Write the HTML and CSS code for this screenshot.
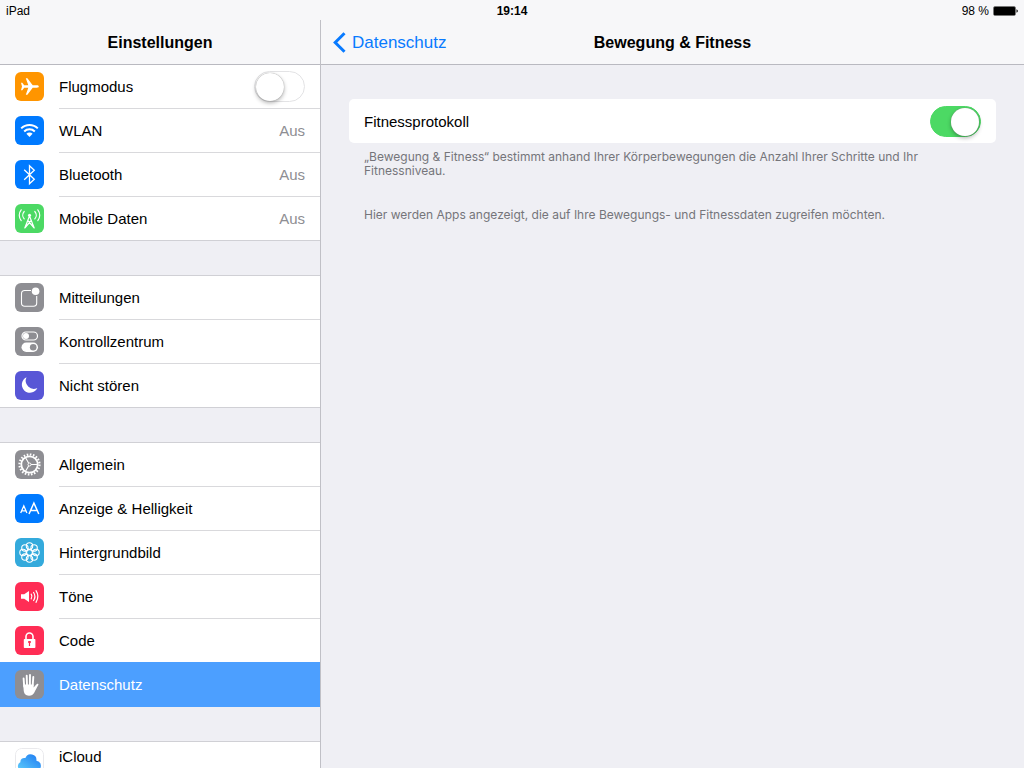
FILE: index.html
```html
<!DOCTYPE html>
<html lang="de">
<head>
<meta charset="utf-8">
<meta name="viewport" content="width=device-width, initial-scale=1">
<title>Einstellungen</title>
<link rel="stylesheet" href="styles.css">
</head>
<body>
<div class="screen">
  <div class="statusbar">
    <span class="device">iPad</span>
    <time class="clock">19:14</time>
    <span class="power">98 %
      <svg class="battery" viewBox="0 0 25 10" aria-hidden="true"><rect x=".5" y=".5" width="22" height="9" rx="1.5" fill="none" stroke="#777"/><rect x="1" y="1" width="21" height="8" rx=".5"/><path d="M23.5 3.2q1.3.5 1.3 1.8t-1.3 1.8z"/></svg>
    </span>
  </div>

  <aside class="sidebar">
    <header class="navbar"><h1 class="title">Einstellungen</h1></header>
    <nav class="menu">
      <ul class="group">
        <li class="row">
          <svg class="icon orange" viewBox="0 0 29 29"><path fill="#fff" d="M23.8 14.5c0-.8-1-1.2-2-1.2h-4.1L12.400 6.300H10.800L13.300 13.300H9.200L7.300 10.800H6L7 14.500L6 18.200H7.300L9.200 15.700H13.300L10.800 22.700H12.400L17.700 15.700H21.800C22.800 15.700 23.800 15.300 23.800 14.500Z"/></svg>
          <label class="line" for="flight"><span>Flugmodus</span><input class="switch" type="checkbox" id="flight"></label>
        </li>
        <li><a class="row" href="#wlan">
          <svg class="icon blue" viewBox="0 0 29 29"><g fill="none" stroke="#fff" stroke-width="2"><path d="M6.200 12.400a11.800 11.800 0 0 1 16.600 0"/><path d="M9.200 15.500a7.500 7.500 0 0 1 10.600 0"/></g><path fill="#fff" d="M11.400 17.700a4.400 4.400 0 0 1 6.200 0L14.500 20.900z"/></svg>
          <span class="line"><span>WLAN</span><span class="value">Aus</span></span></a></li>
        <li><a class="row" href="#bluetooth">
          <svg class="icon blue" viewBox="0 0 29 29"><path fill="none" stroke="#fff" stroke-width="1.300" d="M9.200 9.800L19.300 19.300L14.500 23.800V5.800L19.300 10.300L9.200 19.800"/></svg>
          <span class="line"><span>Bluetooth</span><span class="value">Aus</span></span></a></li>
        <li><a class="row" href="#mobile">
          <svg class="icon green" viewBox="0 0 29 29"><g fill="none" stroke="#fff" stroke-width="1.200" stroke-linecap="round"><path d="M9.200 7.500a5.500 5.500 0 0 0 0 7.400M19.800 7.500a5.500 5.500 0 0 1 0 7.400M6.200 5.800a8.500 8.500 0 0 0 0 10.800M22.800 5.800a8.500 8.500 0 0 1 0 10.800"/><path d="M14.500 12L9.800 24M14.500 12L19.200 24M12.800 16.500L18.800 23.500M16.200 16.500L10.200 23.500M12.500 17.500h4"/></g><circle cx="14.500" cy="11.200" r="1.500" fill="#fff"/></svg>
          <span class="line"><span>Mobile Daten</span><span class="value">Aus</span></span></a></li>
      </ul>

      <ul class="group">
        <li><a class="row" href="#mitteilungen">
          <svg class="icon gray" viewBox="0 0 29 29"><path fill="none" stroke="#fff" stroke-width="1.100" d="M16 7.500H9.700a3.200 3.200 0 0 0-3.200 3.200v9.300a3.200 3.200 0 0 0 3.200 3.200h8.800a3.200 3.200 0 0 0 3.200-3.200V13"/><circle cx="20.600" cy="8.300" r="3.800" fill="#fff"/></svg>
          <span class="line">Mitteilungen</span></a></li>
        <li><a class="row" href="#kontrollzentrum">
          <svg class="icon gray" viewBox="0 0 29 29"><rect x="7" y="5" width="15.500" height="8" rx="4" fill="none" stroke="#fff" stroke-width="1.200"/><circle cx="11" cy="9" r="3" fill="#fff"/><rect x="6.500" y="15.500" width="16.500" height="9.500" rx="4.750" fill="#fff"/><circle cx="18.200" cy="20.250" r="3.300" fill="#8e8e93"/></svg>
          <span class="line">Kontrollzentrum</span></a></li>
        <li><a class="row" href="#ruhe">
          <svg class="icon purple" viewBox="0 0 29 29"><path fill="#fff" d="M11.500 6.300A8.100 8.100 0 1 0 22.300 17A8.100 8.100 0 0 1 11.500 6.300Z"/></svg>
          <span class="line">Nicht stören</span></a></li>
      </ul>

      <ul class="group">
        <li><a class="row" href="#allgemein">
          <svg class="icon gray" viewBox="0 0 29 29"><g fill="none" stroke="#fff"><circle cx="14.500" cy="14.500" r="10" stroke-width="2.200" stroke-dasharray="1.600 1.542"/><circle cx="14.500" cy="14.500" r="8.200" stroke-width="1.800"/><path stroke-width="1.100" d="M16 14.500h6M13.700 13.200L10.600 7.800M13.700 15.800L10.600 21.200"/><circle cx="14.500" cy="14.500" r="1.500" stroke-width="1"/></g></svg>
          <span class="line">Allgemein</span></a></li>
        <li><a class="row" href="#anzeige">
          <svg class="icon blue" viewBox="0 0 29 29"><g fill="none" stroke="#fff"><path stroke-width="1.300" d="M5.700 19L8.800 11.800L11.900 19M6.800 16.900h4"/><path stroke-width="1.500" d="M14 20L18.900 9L23.800 20M15.700 16.400h6.400"/></g></svg>
          <span class="line">Anzeige &amp; Helligkeit</span></a></li>
        <li><a class="row" href="#hintergrund">
          <svg class="icon cyan" viewBox="0 0 29 29"><g fill="none" stroke="#fff" stroke-width="1.100"><circle cx="14.500" cy="14.500" r="2.900"/><circle cx="14.500" cy="8" r="3.200"/><circle cx="19.100" cy="9.900" r="3.200"/><circle cx="21" cy="14.500" r="3.200"/><circle cx="19.100" cy="19.100" r="3.200"/><circle cx="14.500" cy="21" r="3.200"/><circle cx="9.900" cy="19.100" r="3.200"/><circle cx="8" cy="14.500" r="3.200"/><circle cx="9.900" cy="9.900" r="3.200"/></g></svg>
          <span class="line">Hintergrundbild</span></a></li>
        <li><a class="row" href="#toene">
          <svg class="icon red" viewBox="0 0 29 29"><path fill="#fff" d="M6 12.200h3.200L14 9v11l-4.800-3.200H6z"/><g fill="none" stroke="#fff" stroke-width="1.200" stroke-linecap="round"><path d="M16.200 12.200q1.500 2.300 0 4.600M18.600 10.500q2.600 4 0 8M21 8.700q3.800 5.800 0 11.600"/></g></svg>
          <span class="line">Töne</span></a></li>
        <li><a class="row" href="#code">
          <svg class="icon red" viewBox="0 0 29 29"><path fill="none" stroke="#fff" stroke-width="1.600" d="M11 13.500V10.500a3.500 3.500 0 0 1 7 0v3.500"/><rect x="8.800" y="13" width="11.600" height="9" rx=".8" fill="#fff"/><path fill="#ff2d55" d="M13.200 15h2.600v2h-.7v3h-1.200v-3h-.7z"/></svg>
          <span class="line">Code</span></a></li>
        <li><a class="row selected" href="#datenschutz" aria-current="page">
          <svg class="icon gray" viewBox="0 0 29 29"><g fill="none" stroke="#fff" stroke-width="1.900" stroke-linecap="round"><path d="M9.200 16.500L8.600 8.500M12 15L11.700 5.800M14.900 15L15 5M17.700 15.500L18.300 7"/></g><path fill="#fff" d="M8.250 14.500H18.600V17.400C19.500 16.700 20.800 14.500 22 13.900C23 13.500 23.900 14.200 23.300 15.100C21.700 17.500 20.600 20.600 19.200 22.700C18 24.700 16.600 25.700 14 25.700C10.500 25.700 9 23.500 8.700 20.500Z"/></svg>
          <span class="line">Datenschutz</span></a></li>
      </ul>

      <ul class="group">
        <li><a class="row account" href="#icloud">
          <svg class="icon cloud" viewBox="0 0 29 29"><defs><linearGradient id="sky" x1="1" y1="0" x2="0" y2="1"><stop offset="0" stop-color="#1b78f2"/><stop offset="1" stop-color="#5fcdfb"/></linearGradient></defs><rect x=".5" y=".5" width="28" height="28" rx="6" fill="#fff" stroke="#e9e9ec"/><path fill="url(#sky)" d="M7 22.500a4.300 4.300 0 0 1-1.600-8.200a3.900 3.900 0 0 1 5-4.200a5.700 5.700 0 0 1 11 2.700a5 5 0 0 1 1.100 9.700z"/></svg>
          <span class="line">iCloud</span></a></li>
      </ul>
    </nav>
  </aside>

  <main class="detail">
    <header class="navbar">
      <a class="back" href="#datenschutz"><svg class="chevron" viewBox="0 0 13 21" aria-hidden="true"><path d="M11.500 1.200L2.200 10.500L11.500 19.800" fill="none" stroke="#087aff" stroke-width="3"/></svg>Datenschutz</a>
      <h2 class="title">Bewegung &amp; Fitness</h2>
    </header>
    <section class="content">
      <label class="card" for="fitness"><span>Fitnessprotokoll</span><input class="switch" type="checkbox" id="fitness" checked></label>
      <p class="note">„Bewegung &amp; Fitness“ bestimmt anhand Ihrer Körperbewegungen die Anzahl Ihrer Schritte und Ihr Fitnessniveau.</p>
      <p class="note apps">Hier werden Apps angezeigt, die auf Ihre Bewegungs- und Fitnessdaten zugreifen möchten.</p>
    </section>
  </main>
</div>
</body>
</html>
```

FILE: styles.css
```css
* { box-sizing: border-box; }

body {
  margin: 0;
  background: #efeff4;
  color: #000;
  font-family: "Liberation Sans", Arial, sans-serif;
  font-size: 15px;
}

h1, h2, p, ul { margin: 0; padding: 0; }
ul { list-style: none; }
a { color: inherit; text-decoration: none; }

.screen {
  display: grid;
  grid-template-columns: 321px 1fr;
  grid-template-rows: 20px 1fr;
  height: 100vh;
  overflow: hidden;
}

.statusbar {
  grid-column: 1 / -1;
  display: grid;
  grid-template-columns: 1fr auto 1fr;
  align-items: center;
  padding: 2px 6px 0;
  background: #f7f7f9;
  font-size: 12px;
}
.clock { font-weight: bold; }
.power {
  display: flex;
  align-items: center;
  justify-content: flex-end;
  gap: 4px;
}
.battery { width: 25px; height: 10px; }

.sidebar {
  min-height: 0;
  overflow: hidden;
  border-right: 1px solid #c0c0c6;
}
.detail { min-width: 0; }

.navbar {
  display: grid;
  grid-template-columns: 1fr auto 1fr;
  align-items: center;
  height: 45px;
  padding: 1px 12px 0;
  border-bottom: 1px solid #b9b9c0;
  background: #f7f7f9;
}
.title {
  grid-column: 2;
  font-size: 16px;
  font-weight: bold;
}
.back {
  display: flex;
  align-items: center;
  gap: 6px;
  color: #087aff;
  font-size: 17px;
}
.chevron { width: 13px; height: 21px; }

.group { background: #fff; }
.group + .group {
  margin-top: 34px;
  border-top: 1px solid #d0d0d5;
}
.row {
  display: flex;
  align-items: flex-start;
  gap: 15px;
  height: 44px;
  padding-left: 15px;
}
.line {
  flex: 1;
  display: flex;
  align-items: center;
  justify-content: space-between;
  height: 44px;
  padding-right: 15px;
  border-bottom: 1px solid #d9d9dc;
}
li:last-child .line { border-color: transparent; }
.group li:last-child { box-shadow: inset 0 -1px #d0d0d5; }
.value { color: #8e8e93; }
.selected {
  position: relative;
  background: #4c9fff;
  color: #fff;
  box-shadow: 0 -1px #4c9fff;
}

.icon {
  flex: none;
  width: 29px;
  height: 29px;
  margin-top: 7px;
  border-radius: 6px;
}
.account { height: 58px; }
.account .icon { margin-top: 6px; }
.account .line { height: 30px; }

.orange { background: #ff9500; }
.blue { background: #007aff; }
.green { background: #4cd964; }
.gray { background: #8e8e93; }
.purple { background: #5856d6; }
.cyan { background: #34aadc; }
.red { background: #ff2d55; }

.switch {
  appearance: none;
  display: flex;
  width: 51px;
  height: 31px;
  margin: 0;
  padding: 1px;
  border: 1px solid #e3e3e5;
  border-radius: 16px;
  background: #fff;
}
.switch::before {
  content: "";
  width: 28px;
  height: 28px;
  border-radius: 50%;
  background: #fff;
  box-shadow: 0 0 1px #888, 0 2px 4px rgba(0, 0, 0, .3);
}
.switch:checked {
  justify-content: flex-end;
  border-color: #4cd964;
  background: #4cd964;
}

.content { padding: 34px 28px; }
.card {
  display: flex;
  align-items: center;
  justify-content: space-between;
  height: 44px;
  padding: 0 15px;
  border-radius: 5px;
  background: #fff;
}
.note {
  padding: 7px 15px 0;
  color: #75757a;
  font-family: Inter, "Liberation Sans", Arial, sans-serif;
  font-size: 12px;
  line-height: 14px;
}
.apps { padding-top: 30px; }
```
